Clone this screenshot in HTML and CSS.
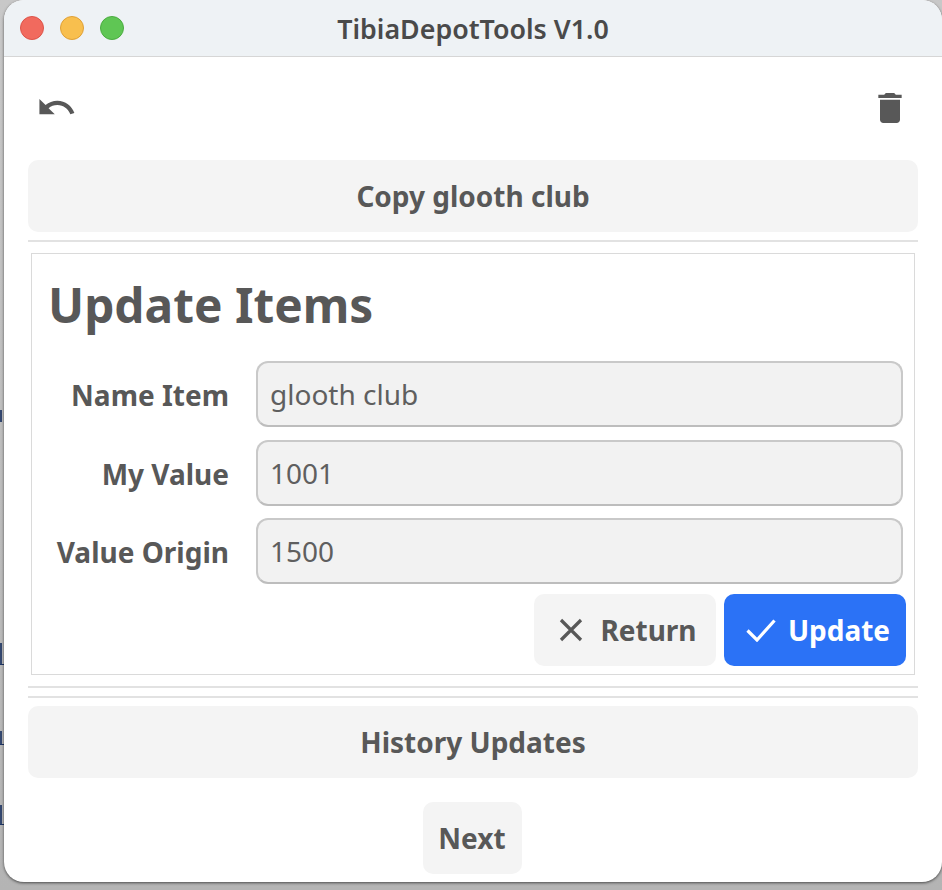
FILE: index.html
```html
<!DOCTYPE html>
<html lang="en">
<head>
  <meta charset="UTF-8">
  <meta name="viewport" content="width=device-width, initial-scale=1.0">
  <title>TibiaDepotTools V1.0</title>
  <link rel="stylesheet" href="styles.css">
</head>
<body>
  <!-- bits of the page behind the window -->
  <div class="behind b1"></div>
  <div class="behind b2"></div>
  <div class="behind b3"></div>
  <div class="behind b4"></div>

  <div class="window">
    <div class="titlebar">
      <div class="lights">
        <span class="light red"></span>
        <span class="light yellow"></span>
        <span class="light green"></span>
      </div>
      <div class="title">TibiaDepotTools V1.0</div>
    </div>

    <div class="content">
      <div class="toolbar">
        <svg class="icon-undo" viewBox="0 0 24 24" width="41" height="41"><path d="M12.5 8c-2.65 0-5.05.99-6.9 2.6L2 7v9h9l-3.62-3.62c1.39-1.16 3.16-1.88 5.12-1.88 3.54 0 6.55 2.31 7.6 5.5l2.37-.78C21.08 11.03 17.15 8 12.5 8z"/></svg>
        <svg class="icon-trash" viewBox="0 0 24 24" width="40" height="40"><path d="M6 19c0 1.1.9 2 2 2h8c1.1 0 2-.9 2-2V7H6v12zM19 4h-3.5l-1-1h-5l-1 1H5v2h14V4z"/></svg>
      </div>

      <button class="btn wide">Copy glooth club</button>
      <div class="rule rule-top"></div>

      <div class="panel">
        <h1>Update Items</h1>
        <div class="row">
          <label>Name Item</label>
          <div class="field">glooth club</div>
        </div>
        <div class="row">
          <label>My Value</label>
          <div class="field">1001</div>
        </div>
        <div class="row">
          <label>Value Origin</label>
          <div class="field">1500</div>
        </div>
        <div class="actions">
          <button class="btn action">
            <svg viewBox="0 0 24 24" width="24" height="24"><path class="stroke" d="M2 2l20 20M22 2L2 22"/></svg>
            Return
          </button>
          <button class="btn action primary check">
            <svg viewBox="0 0 30 23" width="30" height="23"><path class="stroke" d="M1.5 11.5l9.5 9.5L28.5 1.5"/></svg>
            Update
          </button>
        </div>
      </div>

      <div class="rule rule-a"></div>
      <div class="rule rule-b"></div>

      <button class="btn wide">History Updates</button>
      <div class="pager">
        <button class="btn next">Next</button>
      </div>
    </div>
  </div>
</body>
</html>
```

FILE: styles.css
```css
html, body {
  margin: 0;
  height: 890px;
  overflow: hidden;
}
body {
  font-family: "Noto Sans", "Open Sans", sans-serif;
  color: #585858;
  background: linear-gradient(to bottom, #c8c8c8, #b4b4b4);
  position: relative;
}
.behind {
  position: absolute;
  left: 0;
  width: 4px;
  border-bottom: 1px solid #1c3566;
}
.behind::before {
  content: "";
  display: block;
  width: 2px;
  height: 100%;
  background: #33476f;
}
.b1 { top: 643px; height: 21px; }
.b2 { top: 731px; height: 13px; }
.b3 { top: 805px; height: 19px; }
.b4 { top: 410px; height: 12px; border-bottom: none; width: 2px; }

.window {
  position: absolute;
  left: 4px;
  top: 0;
  width: 938px;
  height: 882px;
  background: #fff;
  border-radius: 20px;
  overflow: hidden;
  box-shadow: 0 1px 3px rgba(0,0,0,0.6);
}
.titlebar {
  height: 56px;
  background: #eef2f5;
  border-bottom: 1px solid #d6d6d6;
  display: flex;
  align-items: center;
  justify-content: center;
  position: relative;
}
.lights {
  position: absolute;
  left: 16px;
  top: 16px;
  display: flex;
  gap: 16px;
}
.light {
  width: 24px;
  height: 24px;
  border-radius: 50%;
  box-sizing: border-box;
  border: 1px solid;
}
.red { background: #f16a5e; border-color: #dc5449; }
.yellow { background: #f8bf4e; border-color: #dfa037; }
.green { background: #5fc654; border-color: #4bac40; }
.title {
  font-size: 26.8px;
  font-weight: 600;
  color: #4a4a4a;
}

.content {
  padding: 0 24px;
}
.toolbar {
  height: 103px;
  display: flex;
  align-items: center;
  justify-content: space-between;
  padding: 0 8px;
  box-sizing: border-box;
}
.toolbar svg { fill: #585858; }
.icon-undo { margin-top: -2px; }
.icon-trash { margin-top: -2px; }

.btn {
  font-family: inherit;
  font-size: 28px;
  font-weight: 700;
  color: #585858;
  background: #f4f4f4;
  border: none;
  border-radius: 10px;
  height: 72px;
  padding: 0;
  display: flex;
  align-items: center;
  justify-content: center;
}
.wide { width: 100%; }

.rule {
  height: 2px;
  background: #e2e2e2;
}
.rule-top { margin-top: 8px; }
.rule-a { margin-top: 11px; }
.rule-b { margin-top: 8px; margin-bottom: 8px; }

.panel {
  margin: 11px 3px 0;
  height: 422px;
  box-sizing: border-box;
  border: 1px solid #dadada;
  padding: 0 8px 0 17px;
}
.panel h1 {
  margin: 0 0 0 -1px;
  height: 107px;
  line-height: 102px;
  font-size: 47.8px;
  font-weight: 700;
}
.row {
  display: flex;
  align-items: center;
  height: 66px;
  margin-bottom: 12px;
  margin-right: 3px;
}
.row:first-of-type { margin-bottom: 13px; }
.row label {
  width: 180px;
  text-align: right;
  font-size: 28px;
  font-weight: 700;
  flex: none;
  padding-top: 2px;
}
.field {
  margin-left: 27px;
  flex: 1;
  height: 66px;
  box-sizing: border-box;
  border: 2px solid #c9c9c9;
  border-bottom-color: #bdbdbd;
  border-radius: 12px;
  background: #f2f2f2;
  padding: 0 12px;
  display: flex;
  align-items: center;
  font-size: 28px;
  color: #5f5f5f;
}
.actions {
  display: flex;
  justify-content: flex-end;
  gap: 8px;
  margin-top: -2px;
}
.action {
  width: 182px;
  gap: 17px;
  padding-left: 6px;
}
.check { gap: 12px; }
.action svg { flex: none; }
.stroke {
  fill: none;
  stroke: currentColor;
  stroke-width: 3.2;
}
.primary {
  background: #2b72f6;
  color: #fff;
}

.pager {
  display: flex;
  justify-content: center;
  margin-top: 24px;
}
.next {
  width: 99px;
  margin-left: -2px;
}
```
